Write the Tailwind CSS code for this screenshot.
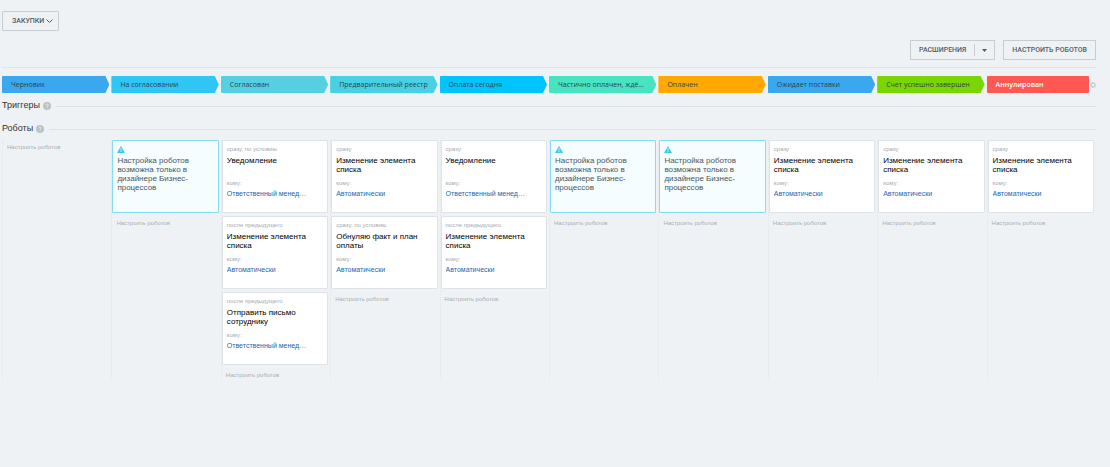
<!DOCTYPE html>
<html lang="ru">
<head>
    <meta charset="UTF-8">
    <meta name="viewport" content="width=device-width, initial-scale=1.0">
    <title>Роботы</title>
    <script src="https://cdn.jsdelivr.net/npm/@tailwindcss/browser@4"></script>
</head>
<body class="min-h-screen bg-[#eef2f4] pt-[11px] pr-[14px] pl-[2px] font-['Liberation_Sans',Arial,sans-serif] text-[#333]">
    <header>
        <button class="flex h-5 items-center gap-[2px] rounded-[1px] border border-[#c6cdd3] pr-[5px] pl-[9px] font-[Roboto,sans-serif] text-[7px] font-medium text-[#535c69]">
            ЗАКУПКИ
            <svg class="h-[6px] w-[7px]" viewBox="0 0 7 6" fill="none" stroke="#535c69"><path d="M0.5 1.5L3.5 4.5L6.5 1.5"/></svg>
        </button>
        <div class="mt-[9px] flex justify-end gap-2 border-b border-[#dfe3e6] pb-[7px] font-[Roboto,sans-serif] text-[7px] font-medium text-[#535c69]">
            <div class="flex h-5 items-center border border-[#c6cdd3]">
                <button class="px-2">РАСШИРЕНИЯ</button>
                <button class="flex h-3 w-5 items-center justify-center border-l border-[#c6cdd3]" aria-label="Ещё">
                    <svg class="h-[3px] w-[5px]" viewBox="0 0 5 3" fill="#535c69"><path d="M0 0H5L2.5 3Z"/></svg>
                </button>
            </div>
            <button class="h-5 border border-[#c6cdd3] px-2">НАСТРОИТЬ РОБОТОВ</button>
        </div>
    </header>

    <main>
        <div id="stages" class="mt-2 grid grid-cols-10 font-['Open_Sans',sans-serif] text-[7px]"></div>

        <div class="mt-[7px] flex h-3 items-center">
            <h2 class="text-[9px]">Триггеры</h2>
            <svg class="mr-[5px] ml-[3px] h-2 w-2" viewBox="0 0 8 8"><circle cx="4" cy="4" r="4" fill="#bcc1c5"/><path d="M2.8 3.2C2.8 1.6 5.2 1.6 5.2 3.1C5.2 3.9 4 3.9 4 4.8M4 5.5V6.3" fill="none" stroke="#eef2f4" stroke-width="0.8"/></svg>
            <div class="h-px flex-1 bg-[#dfe3e6]"></div>
        </div>
        <div class="mt-[11px] flex h-3 items-center">
            <h2 class="text-[9px]">Роботы</h2>
            <svg class="mr-[5px] ml-[3px] h-2 w-2" viewBox="0 0 8 8"><circle cx="4" cy="4" r="4" fill="#bcc1c5"/><path d="M2.8 3.2C2.8 1.6 5.2 1.6 5.2 3.1C5.2 3.9 4 3.9 4 4.8M4 5.5V6.3" fill="none" stroke="#eef2f4" stroke-width="0.8"/></svg>
            <div class="h-px flex-1 bg-[#dfe3e6]"></div>
        </div>

        <div id="robots" class="mt-[5px] grid grid-cols-10"></div>
    </main>

    <script>
        const change = { when: 'сразу', title: 'Изменение элемента списка', who: 'Автоматически' };
        const changeAfter = { when: 'после предыдущего', title: 'Изменение элемента списка', who: 'Автоматически' };
        const locked = { locked: true };
        const manager = 'Ответственный менед…';

        const stages = [
            { name: 'Черновик', color: '#39a8ef', robots: [] },
            { name: 'На согласовании', color: '#2fc6f6', robots: [locked] },
            { name: 'Согласован', color: '#55d0e0', robots: [
                { when: 'сразу, по условию', title: 'Уведомление', who: manager },
                changeAfter,
                { when: 'после предыдущего', title: 'Отправить письмо сотруднику', who: manager }
            ] },
            { name: 'Предварительный реестр', color: '#47d1e2', robots: [
                change,
                { when: 'сразу, по условию', title: 'Обнуляю факт и план оплаты', who: 'Автоматически' }
            ] },
            { name: 'Оплата сегодня', color: '#00c4fb', robots: [
                { when: 'сразу', title: 'Уведомление', who: manager },
                changeAfter
            ] },
            { name: 'Частично оплачен, ждё…', color: '#47e4c2', robots: [locked] },
            { name: 'Оплачен', color: '#ffa900', robots: [locked] },
            { name: 'Ожидает поставки', color: '#39a8ef', robots: [change] },
            { name: 'Счет успешно завершен', color: '#7bd500', robots: [change] },
            { name: 'Аннулирован', color: '#ff5752', last: true, robots: [change] }
        ];

        function stageHtml(s) {
            if (s.last) {
                return `<div class="flex min-w-0 items-center gap-px">
                    <div class="h-[17px] min-w-0 flex-1 truncate rounded-[1px] px-[9px] leading-[17px] font-semibold text-white" style="background:${s.color}">${s.name}</div>
                    <button aria-label="Настройки"><svg class="h-[6px] w-[6px]" viewBox="0 0 6 6" fill="none" stroke="#bcc3c8"><circle cx="3" cy="3" r="2"/><path d="M3 0V1M3 5V6M0 3H1M5 3H6M0.7 0.7L1.6 1.6M4.4 4.4L5.3 5.3M5.3 0.7L4.4 1.6M1.6 4.4L0.7 5.3"/></svg></button>
                </div>`;
            }
            return `<div class="mr-[2px] h-[17px] min-w-0 truncate rounded-l-[1px] pr-[6px] pl-[9px] leading-[17px] text-[#2d4254] [clip-path:polygon(0_0,calc(100%_-_4px)_0,100%_50%,calc(100%_-_4px)_100%,0_100%)]" style="background:${s.color}">${s.name}</div>`;
        }

        function robotHtml(r) {
            if (r.locked) {
                return `<div class="h-[73px] rounded-[1px] border border-[#83dcf2] bg-[#f5fdff] px-1 pt-[5px] text-[8px] leading-[9px] text-[#4a5560]">
                    <svg class="mb-[3px] h-[7px] w-2" viewBox="0 0 8 7"><path d="M4 0L8 7H0Z" fill="#3bc8f5"/><path d="M4 2.2V4.6M4 5.2V6" stroke="#fff" stroke-width="0.8"/></svg>
                    Настройка роботов возможна только в дизайнере Бизнес-процессов
                </div>`;
            }
            return `<div class="h-[73px] rounded-[1px] border border-[#dfe3e7] bg-white px-1 pt-1">
                <div class="text-[6px] leading-[8px] text-[#a2a9b1]">${r.when}</div>
                <div class="mt-[3px] h-[18px] text-[8px] leading-[9px] text-black">${r.title}</div>
                <div class="mt-[5px] text-[6px] leading-[8px] text-[#a2a9b1]">кому:</div>
                <a href="#" class="mt-[2px] block truncate text-[7px] leading-[10px] text-[#2067b0]">${r.who}</a>
            </div>`;
        }

        document.getElementById('stages').innerHTML = stages.map(stageHtml).join('');
        document.getElementById('robots').innerHTML = stages.map(s => `
            <div class="flex min-h-60 min-w-0 flex-col items-stretch gap-[3px] border-l border-dotted border-[#e2e6e9] pr-[2px]">
                ${s.robots.map(robotHtml).join('')}
                <a href="#" class="mt-[3px] pl-1 text-[6px] leading-[8px] text-[#a8afb6]">Настроить роботов</a>
            </div>`).join('');
    </script>
</body>
</html>
